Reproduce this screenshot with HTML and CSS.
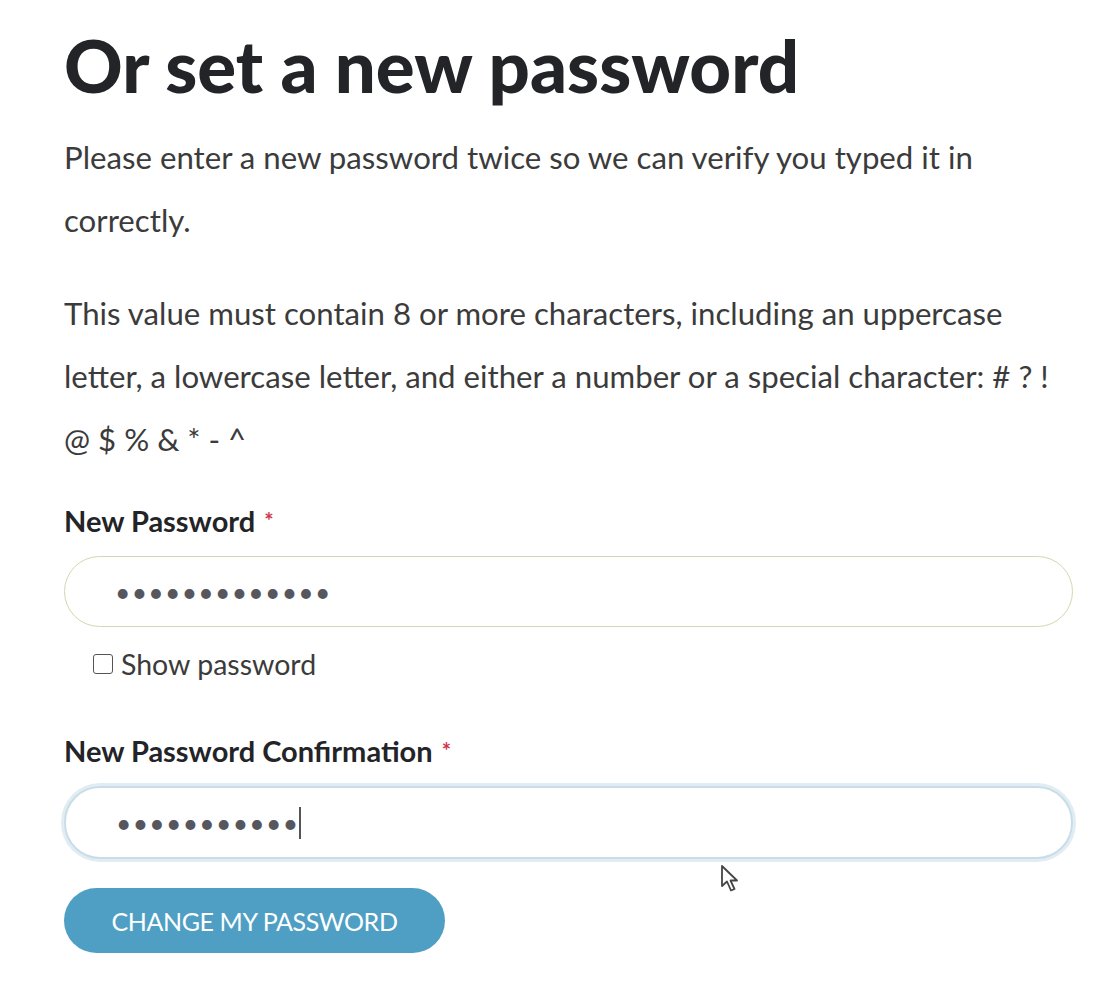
FILE: index.html
```html
<!DOCTYPE html>
<html>
<head>
<meta charset="utf-8">
<link rel="stylesheet" href="styles.css">
</head>
<body>
<main class="page">
  <h1 class="title">Or set a new password</h1>
  <p class="text">Please enter a new password twice so we can verify you typed it in correctly.</p>
  <p class="text">This value must contain 8 or more characters, including an uppercase letter, a lowercase letter, and either a number or a special character: # ? ! @ $ % &amp; * - ^</p>
  <form class="form">
    <div class="field">
      <label class="label">New Password <span class="req">*</span></label>
      <div class="input input-filled"><span class="dots">•••••••••••••</span></div>
      <label class="show"><span class="box"></span>Show password</label>
    </div>
    <div class="field">
      <label class="label">New Password Confirmation <span class="req">*</span></label>
      <div class="input input-focus"><span class="dots">•••••••••••</span><span class="caret"></span></div>
    </div>
    <button type="button" class="btn">CHANGE MY PASSWORD</button>
  </form>
  <svg class="cursor" width="24" height="32" viewBox="0 0 24 32"><path d="M2 2 L2 22 L7 17.5 L11 26.5 L14.5 25 L10.5 16.5 L17 16.5 Z" fill="#ffffff" stroke="#454545" stroke-width="1.8" stroke-linejoin="round"/></svg>
</main>
</body>
</html>
```
FILE: styles.css
```css
html, body { margin: 0; padding: 0; background: #fff; }
body { font-family: Lato, "Open Sans", sans-serif; color: #383838; }
.page { position: relative; padding: 21px 27px 0 64px; width: 1009px; min-height: 978px; }
.title { font-size: 72.5px; font-weight: 900; color: #232427; margin: 0 0 18px; line-height: 1.2; }
.text { font-size: 31.2px; line-height: 63px; margin: 0 0 30px; color: #3b3b3b; }
.form { display: flex; flex-direction: column; }
.field { display: flex; flex-direction: column; }
.label { font-size: 29px; font-weight: 700; color: #232427; line-height: 40px; }
.req { color: #d0344e; font-size: 22px; vertical-align: top; margin-left: 2px; }
.input { height: 71px; border-radius: 36px; box-sizing: border-box; display: flex; align-items: center; padding-left: 50px; margin-top: 15px; background: #fff; }
.input-filled { border: 1.5px solid #d6d6b0; }
.input-focus { border: 2px solid #c9dde8; box-shadow: 0 0 0 3px #e1edf3; height: 73px; }
.dots { font-size: 26.5px; letter-spacing: 1.3px; color: #56575e; }
.caret { width: 2px; height: 32px; background: #555; margin-left: 0; }
.show { display: flex; align-items: center; font-size: 28.5px; color: #3b3b3b; margin: 20px 0 50px 29px; }
.box { width: 20px; height: 20px; border: 1.5px solid #555; border-radius: 3px; margin-right: 8px; box-sizing: border-box; }
.btn { align-self: flex-start; margin-top: 29px; width: 381px; height: 65px; border: none; border-radius: 33px; background: #4f9fc4; color: #fff; font-family: Lato, sans-serif; font-size: 25px; letter-spacing: -0.4px; }
.cursor { position: absolute; left: 720px; top: 864px; display: block; }
```
